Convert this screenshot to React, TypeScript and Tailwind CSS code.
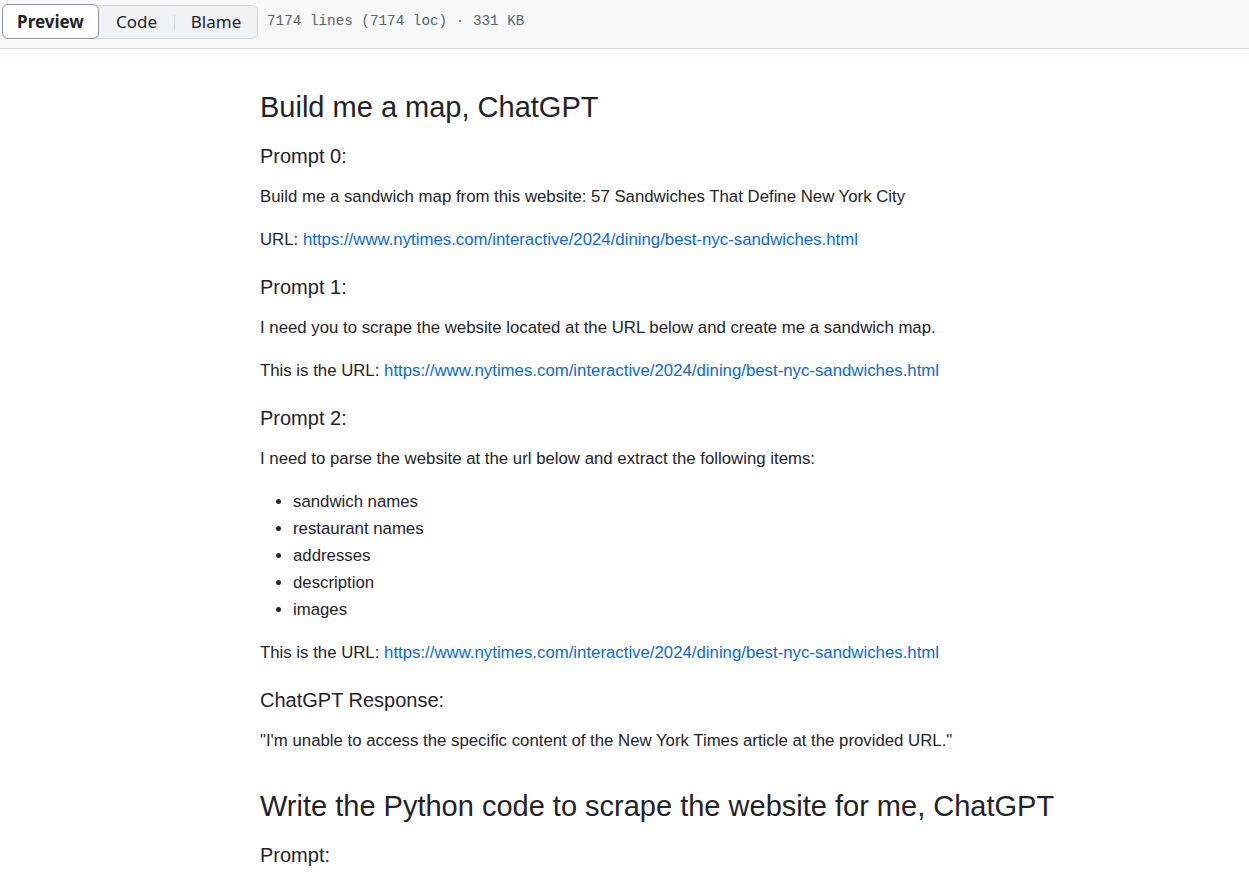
import React from "react";

const URL = "https://www.nytimes.com/interactive/2024/dining/best-nyc-sandwiches.html";

const items = ["sandwich names", "restaurant names", "addresses", "description", "images"];

function P({ children }: { children: React.ReactNode }) {
  return <p className="text-[16.8px] leading-[27px] mb-[16px]">{children}</p>;
}

function H3({ children }: { children: React.ReactNode }) {
  return <h3 className="text-[20px] leading-[31px] mt-[3px] mb-[11px]">{children}</h3>;
}

function Link() {
  return (
    <a href="#" className="text-[#0969da]">
      {URL}
    </a>
  );
}

export default function App() {
  return (
    <div className="min-h-screen bg-white text-[#1f2328]" style={{ fontFamily: '"Liberation Sans", Arial, sans-serif' }}>
      {/* File header bar */}
      <div className="h-[49px] bg-[#f6f8fa] border-b border-[#d1d9e0] flex items-start pt-[4px] pl-[2px]">
        <div className="flex items-center h-[34px] mt-px bg-[#eff2f5] border border-[#d1d9e0] rounded-[6px] font-['Noto_Sans',sans-serif] text-[17px] text-[#1f2328]">
          <button className="w-[97px] h-[35px] -ml-px -mt-[2px] -mb-px bg-white border border-[#8c959f] rounded-[6px] font-bold text-center">
            Preview
          </button>
          <span className="w-[75px] text-center">Code</span>
          <span className="w-px h-[15px] bg-[#d1d9e0]" />
          <span className="w-[82px] text-center">Blame</span>
        </div>
        <span className="ml-[9px] mt-[7px] font-['Liberation_Mono',monospace] text-[14.3px] text-[#59636e]">
          7174 lines (7174 loc) · 331 KB
        </span>
      </div>

      {/* Markdown body */}
      <article className="flex flex-col pl-[260px] pt-[38px]">
        <h1 className="text-[29px] leading-[40px] mb-[11px]">Build me a map, ChatGPT</h1>
        <H3>Prompt 0:</H3>
        <P>Build me a sandwich map from this website: 57 Sandwiches That Define New York City</P>
        <P>
          URL: <Link />
        </P>
        <H3>Prompt 1:</H3>
        <P>I need you to scrape the website located at the URL below and create me a sandwich map.</P>
        <P>
          This is the URL: <Link />
        </P>
        <H3>Prompt 2:</H3>
        <P>I need to parse the website at the url below and extract the following items:</P>
        <ul className="list-disc pl-[33px] mb-[16px] text-[16.8px] leading-[27px]">
          {items.map((i) => (
            <li key={i}>{i}</li>
          ))}
        </ul>
        <P>
          This is the URL: <Link />
        </P>
        <H3>ChatGPT Response:</H3>
        <P>"I'm unable to access the specific content of the New York Times article at the provided URL."</P>
        <h1 className="text-[29px] leading-[40px] mt-[16px] mb-[11px]">
          Write the Python code to scrape the website for me, ChatGPT
        </h1>
        <H3>Prompt:</H3>
      </article>
    </div>
  );
}
